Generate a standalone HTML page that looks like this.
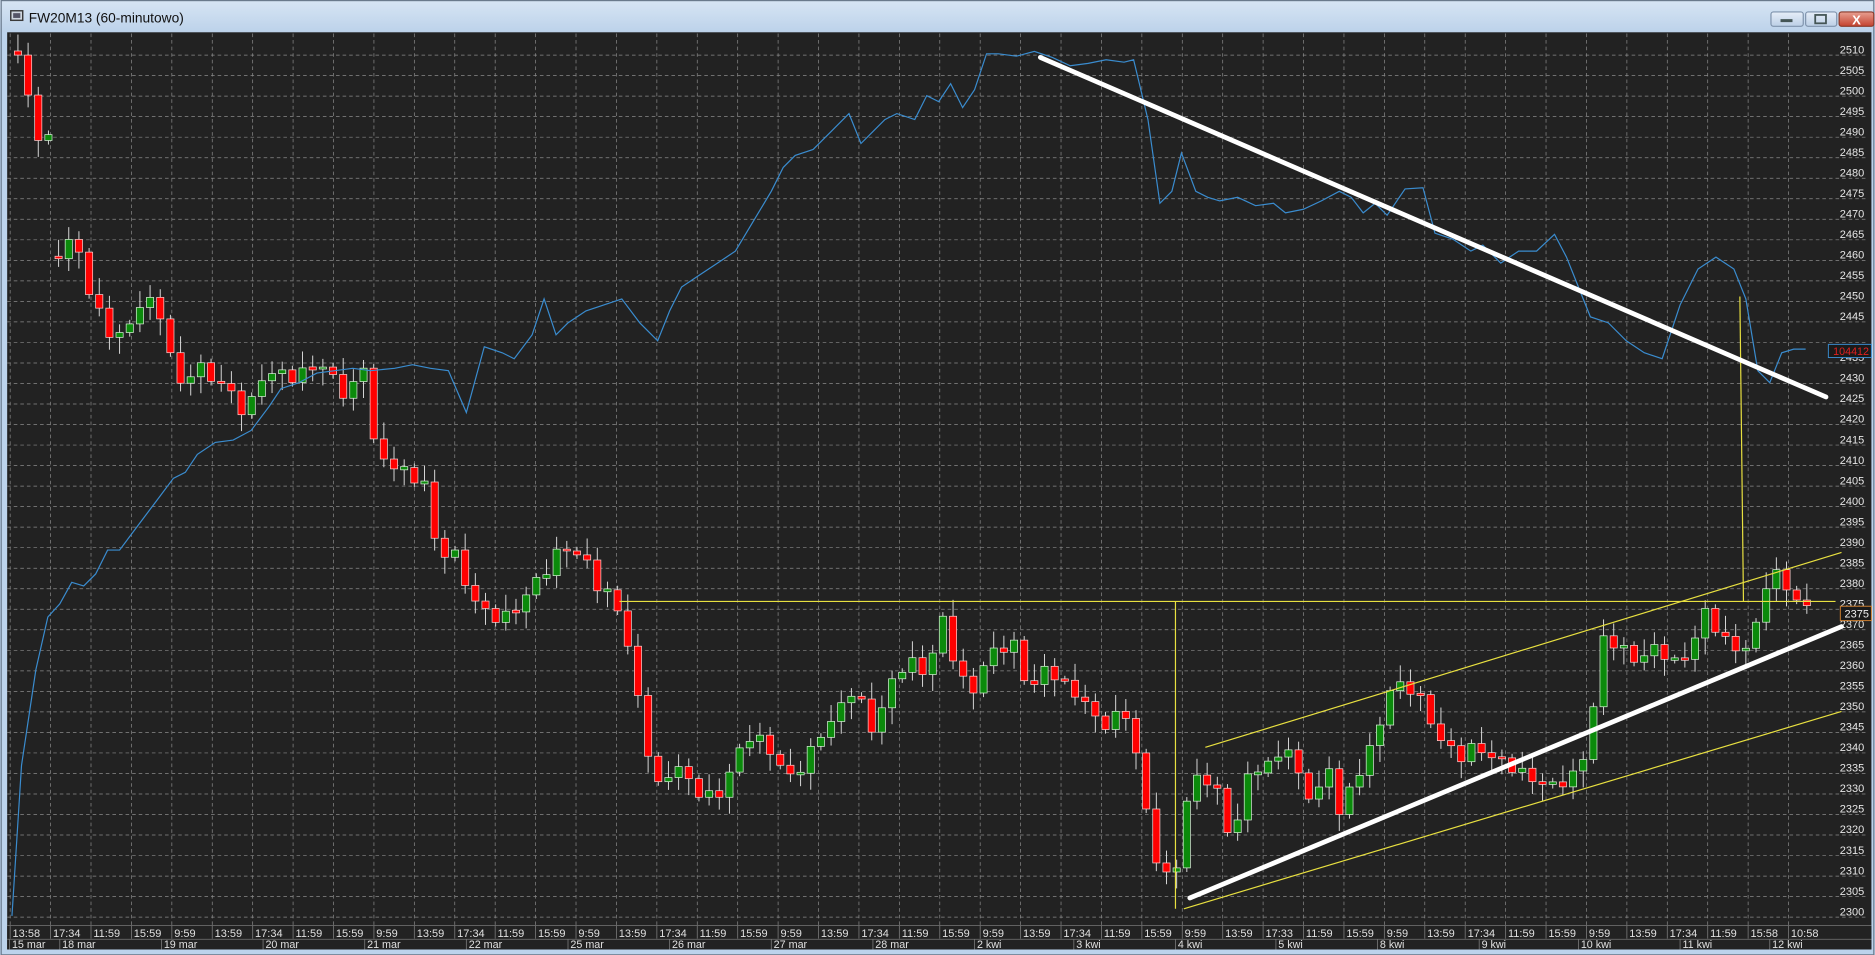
<!DOCTYPE html>
<html><head><meta charset="utf-8">
<style>
html,body{margin:0;padding:0;background:#bcd3ec;overflow:hidden}
svg{display:block}
text{font-family:"Liberation Sans",Arial,sans-serif}
</style></head>
<body>
<svg id="s" width="1875" height="955" viewBox="0 0 1568 798.66" preserveAspectRatio="none" xmlns="http://www.w3.org/2000/svg">
<defs>
<linearGradient id="tb" x1="0" y1="0" x2="0" y2="1"><stop offset="0" stop-color="#d7e5f4"/><stop offset="1" stop-color="#bcd2ea"/></linearGradient>
<linearGradient id="cl" x1="0" y1="0" x2="0" y2="1"><stop offset="0" stop-color="#e8a092"/><stop offset="1" stop-color="#c4422e"/></linearGradient>
<linearGradient id="bt" x1="0" y1="0" x2="0" y2="1"><stop offset="0" stop-color="#e6eef8"/><stop offset="1" stop-color="#bccfe6"/></linearGradient>
</defs>
<rect x="0" y="0" width="1568" height="799" fill="#bcd3ec"/>
<rect x="0" y="0" width="1568" height="27" fill="url(#tb)"/>
<rect x="1" y="0.5" width="1566" height="798" fill="none" stroke="#6a7a8c" stroke-width="1"/>
<rect x="9" y="9" width="10" height="8" fill="#cfd6de" stroke="#3a3a3a" stroke-width="1.2"/>
<rect x="11" y="11" width="6" height="4" fill="#556"/>
<text x="24" y="19" font-size="11.5" fill="#111">FW20M13 (60-minutowo)</text>
<rect x="1481" y="10" width="27" height="12" rx="2" fill="url(#bt)" stroke="#7f93ac"/>
<rect x="1489" y="16" width="10" height="2.5" fill="#455"/>
<rect x="1510" y="10" width="26" height="12" rx="2" fill="url(#bt)" stroke="#7f93ac"/>
<rect x="1518" y="12.5" width="9" height="7" fill="none" stroke="#455" stroke-width="1.5"/>
<rect x="1538" y="10" width="29" height="12" rx="2" fill="url(#cl)" stroke="#8a3a2a"/>
<text x="1552.5" y="20.5" font-size="11" font-weight="bold" fill="#fff" text-anchor="middle">X</text>
<rect x="6" y="27" width="1559" height="767" fill="#222"/>
<g id="g"></g>
</svg>
<script>
var NS="http://www.w3.org/2000/svg",G=document.getElementById("g");
function el(t,a,txt){var e=document.createElementNS(NS,t);for(var k in a)e.setAttribute(k,a[k]);if(txt!=null)e.textContent=txt;G.appendChild(e);return e;}
function Y(p){return 767-(p-2300)*3.433;}
for(var p=2300;p<=2510;p+=5){var y=Y(p);
 el("line",{x1:6,y1:y,x2:1560,y2:y,stroke:"#8a8a8a","stroke-width":0.6,"stroke-dasharray":"3,2.5"});
 if(p!=2440) el("text",{x:1559,y:y-1.5,"font-size":9.2,fill:"#e6e6e6","text-anchor":"end"},p);
}
var tl="13:58,17:34,11:59,15:59,9:59,13:59,17:34,11:59,15:59,9:59,13:59,17:34,11:59,15:59,9:59,13:59,17:34,11:59,15:59,9:59,13:59,17:34,11:59,15:59,9:59,13:59,17:34,11:59,15:59,9:59,13:59,17:33,11:59,15:59,9:59,13:59,17:34,11:59,15:59,9:59,13:59,17:34,11:59,15:58,10:58".split(",");
el("rect",{x:6,y:774,width:1559,height:20,fill:"#222"});
for(var i=0;i<tl.length;i++){var x=8.5+i*33.8;
 el("line",{x1:x,y1:28,x2:x,y2:774,stroke:"#8a8a8a","stroke-width":0.6,"stroke-dasharray":"3,2.5"});
 el("line",{x1:x,y1:774,x2:x,y2:785,stroke:"#777","stroke-width":0.7});
 el("text",{x:x+2,y:783.5,"font-size":9.2,fill:"#e0e0e0"},tl[i]);
}
el("line",{x1:6,y1:774,x2:1565,y2:774,stroke:"#777","stroke-width":0.7});
el("line",{x1:6,y1:785.5,x2:1565,y2:785.5,stroke:"#777","stroke-width":0.7});
var dl=[[8,"15 mar"],[50,"18 mar"],[135,"19 mar"],[220,"20 mar"],[305,"21 mar"],[390,"22 mar"],[475,"25 mar"],[560,"26 mar"],[645,"27 mar"],[730,"28 mar"],[815,"2 kwi"],[898,"3 kwi"],[983,"4 kwi"],[1067,"5 kwi"],[1152,"8 kwi"],[1237,"9 kwi"],[1320,"10 kwi"],[1405,"11 kwi"],[1480,"12 kwi"]];
dl.forEach(function(d){el("line",{x1:d[0],y1:785.5,x2:d[0],y2:794,stroke:"#777","stroke-width":0.7});el("text",{x:d[0]+2,y:793,"font-size":9,fill:"#e0e0e0"},d[1]);});
var kp=[[15,2510],[24,2498],[33,2489],[42,2490],[49,2462],[60,2466],[75,2452],[93,2442],[110,2443],[120,2452],[135,2447],[150,2428],[165,2435],[185,2430],[205,2422],[220,2433],[245,2431],[265,2436],[290,2426],[305,2436],[315,2410],[330,2410],[355,2406],[365,2388],[380,2389],[395,2378],[410,2372],[425,2374],[445,2380],[460,2385],[470,2392],[490,2386],[500,2380],[515,2378],[525,2366],[540,2342],[550,2332],[565,2338],[580,2330],[600,2330],[615,2338],[630,2345],[645,2341],[660,2333],[670,2336],[685,2345],[700,2349],[715,2356],[730,2346],[745,2356],[760,2363],[775,2360],[790,2373],[800,2359],[815,2356],[825,2363],[850,2367],[860,2355],[875,2360],[890,2357],[905,2354],[920,2345],[935,2350],[945,2350],[955,2330],[965,2315],[975,2310],[985,2314],[995,2333],[1010,2333],[1020,2330],[1030,2318],[1045,2335],[1060,2337],[1075,2343],[1085,2334],[1100,2327],[1110,2340],[1120,2325],[1135,2334],[1150,2344],[1160,2355],[1175,2356],[1190,2353],[1205,2343],[1220,2338],[1235,2343],[1250,2338],[1265,2336],[1280,2335],[1295,2331],[1305,2332],[1320,2336],[1330,2346],[1340,2367],[1355,2366],[1370,2363],[1385,2365],[1400,2362],[1415,2366],[1425,2374],[1440,2368],[1455,2366],[1465,2365],[1475,2380],[1485,2384],[1495,2381],[1505,2376],[1512,2374]];
function interp(x){for(var i=0;i<kp.length-1;i++){if(x<=kp[i+1][0]){var a=kp[i],b=kp[i+1];return a[1]+(b[1]-a[1])*(x-a[0])/(b[0]-a[0]);}}return kp[kp.length-1][1];}
var prev=2511,n=0,gapDone=false;
for(var x=15;x<=1513;x+=8.5){n++;
 if(x>45&&!gapDone){prev=2461;gapDone=true;}
 var c=interp(x)+((n*7)%5-2)*0.8;var o=prev;
 var hi=Math.max(o,c)+1+((n*3)%4),lo=Math.min(o,c)-1-((n*5)%4);
 el("line",{x1:x,y1:Y(hi),x2:x,y2:Y(lo),stroke:"#ddd","stroke-width":0.8});
 var t=Y(Math.max(o,c)),b=Y(Math.min(o,c));if(b-t<1.5){t-=0.8;b+=0.8;}
 el("rect",{x:x-3,y:t,width:6,height:b-t,fill:c>o?"#0b8a0b":"#ff0000",stroke:c>o?"#d8f0d8":"#f8d0d0","stroke-width":0.6});
 prev=c;
}
var bl="10,766 18,640 30,560 40,516 50,505 60,487 70,490 80,480 90,460 100,460 115,440 130,420 145,400 155,395 165,380 180,370 195,368 210,360 225,340 235,325 250,320 265,312 280,310 295,308 310,310 330,308 345,305 360,308 375,310 390,345 405,290 420,295 430,300 445,280 455,250 465,280 475,270 490,260 505,255 520,250 535,270 550,285 560,260 570,240 585,230 600,220 615,210 630,185 645,160 655,140 665,130 680,125 695,110 710,95 720,120 730,110 740,100 750,95 765,100 775,80 785,85 795,70 805,90 815,75 825,45 835,45 850,47 865,43 880,48 895,55 910,53 925,50 940,52 948,50 960,100 970,170 980,160 988,128 1000,160 1010,165 1020,168 1035,165 1050,172 1065,170 1075,178 1090,175 1105,168 1120,160 1130,165 1140,178 1150,170 1160,180 1175,158 1190,157 1200,195 1215,200 1230,210 1240,205 1255,220 1270,210 1285,210 1300,196 1310,215 1320,240 1330,265 1345,270 1360,285 1375,295 1390,300 1405,255 1420,225 1435,215 1450,225 1460,250 1470,310 1480,320 1490,295 1500,292 1510,292";
el("polyline",{points:bl,fill:"none",stroke:"#3a8ccf","stroke-width":1});
var yl=[[518,503,1535,503],[983,503,983,760],[1455,248,1458,503],[1008,625,1540,462],[990,760,1540,595]];
yl.forEach(function(l){el("line",{x1:l[0],y1:l[1],x2:l[2],y2:l[3],stroke:"#e8e040","stroke-width":1});});
el("line",{x1:870,y1:48,x2:1527,y2:332,stroke:"#fff","stroke-width":4,"stroke-linecap":"round"});
el("line",{x1:995,y1:751,x2:1540,y2:524,stroke:"#fff","stroke-width":4,"stroke-linecap":"round"});
el("rect",{x:1529,y:288,width:36,height:11,fill:"#1a1a1a",stroke:"#3a8ccf","stroke-width":0.8});
el("text",{x:1563,y:297,"font-size":9,fill:"#e02020","text-anchor":"end"},"104412");
el("rect",{x:1539,y:507,width:26,height:12,fill:"#1a1a1a",stroke:"#d08030","stroke-width":0.8});
el("text",{x:1563,y:516.5,"font-size":9.2,fill:"#eee","text-anchor":"end"},"2375");
</script>
</body></html>
